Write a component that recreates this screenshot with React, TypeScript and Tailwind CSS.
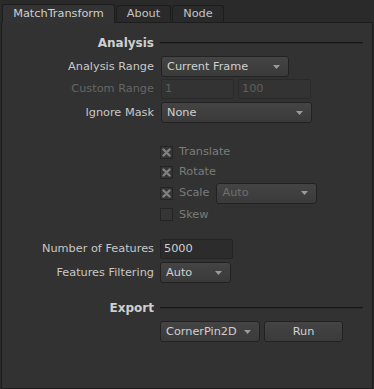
import type { FC, ReactNode } from "react";

// Nuke-style node properties panel

const Arrow: FC = () => (
  <svg width="7" height="4" viewBox="0 0 7 4" className="shrink-0">
    <path d="M0 0h7L3.5 4z" fill="#9a9a9a" />
  </svg>
);

const Dropdown: FC<{ value: string; w: string; disabled?: boolean }> = ({
  value,
  w,
  disabled,
}) => (
  <div
    className={`${w} h-full flex items-center justify-between pl-[5px] pr-[8px] rounded-[3px] border border-[#222] bg-gradient-to-b from-[#444] to-[#3a3a3a] ${
      disabled ? "text-[#6e6e6e]" : "text-[#d0d0d0]"
    }`}
  >
    <span>{value}</span>
    <Arrow />
  </div>
);

const Field: FC<{ value: string; w: string; disabled?: boolean }> = ({
  value,
  w,
  disabled,
}) => (
  <div
    className={`${w} h-full flex items-center pl-[3px] rounded-[2px] border ${
      disabled
        ? "border-[#2a2a2a] bg-[#333] text-[#5e5e5e]"
        : "border-[#242424] bg-[#2c2c2c] text-[#d0d0d0]"
    }`}
  >
    {value}
  </div>
);

const Row: FC<{ label?: string; dim?: boolean; h: string; mt: string; children: ReactNode }> = ({
  label,
  dim,
  h,
  mt,
  children,
}) => (
  <div className={`flex items-center gap-[6px] ${h} ${mt}`}>
    <div className={`w-[152px] text-right ${dim ? "text-[#666]" : "text-[#c8c8c8]"}`}>
      {label}
    </div>
    <div className="flex h-full items-center gap-[4px]">{children}</div>
  </div>
);

const Header: FC<{ title: string; mt: string }> = ({ title, mt }) => (
  <div className={`flex items-center gap-[6px] h-[18px] ${mt}`}>
    <div className="w-[152px] text-right font-bold text-[#cfcfcf] text-[12px]">{title}</div>
    <div className="w-[203px] h-[2px] border-t border-[#161616] bg-[#2b2b2b]" />
  </div>
);

const Check: FC<{ label: string; checked?: boolean; h: string; children?: ReactNode }> = ({
  label,
  checked,
  h,
  children,
}) => (
  <div className={`flex items-center ${h} pl-[158px] text-[#7c7c7c]`}>
    <div className="w-[13px] h-[13px] border border-[#242424] bg-[#353535] flex items-center justify-center">
      {checked && (
        <svg width="9" height="9" viewBox="0 0 9 9">
          <path d="M1.5 1.5l6 6M7.5 1.5l-6 6" stroke="#808080" strokeWidth="2.4" strokeLinecap="round" />
        </svg>
      )}
    </div>
    <span className="ml-[6px]">{label}</span>
    {children}
  </div>
);

export default function App() {
  return (
    <div
      className="w-[374px] h-[389px] bg-[#2a2a2a] text-[11.3px] leading-none overflow-hidden"
      style={{ fontFamily: '"DejaVu Sans", Verdana, sans-serif' }}
    >
      <div className="flex items-end h-[22px] pl-[2px] gap-[1px]">
        <div className="w-[113px] h-[19px] flex items-center justify-center bg-[#333] border border-b-0 border-[#1d1d1d] rounded-t-[3px] text-[#cfcfcf] relative top-[1px]">
          MatchTransform
        </div>
        <div className="w-[55px] h-[17px] flex items-center justify-center bg-[#2a2a2a] border border-b-0 border-[#1d1d1d] rounded-t-[3px] text-[#c4c4c4]">
          About
        </div>
        <div className="w-[52px] h-[17px] flex items-center justify-center bg-[#2a2a2a] border border-b-0 border-[#1d1d1d] rounded-t-[3px] text-[#c4c4c4]">
          Node
        </div>
      </div>
      <div className="ml-[1px] w-[372px] h-[367px] border border-[#1d1d1d] bg-[#323232] pt-[11px]">
        <Header title="Analysis" mt="mt-0" />
        <Row label="Analysis Range" h="h-[21px]" mt="mt-[4px]">
          <Dropdown value="Current Frame" w="w-[128px] ml-[1px]" />
        </Row>
        <Row label="Custom Range" dim h="h-[20px]" mt="mt-[2px]">
          <Field value="1" w="w-[73px] ml-[1px]" disabled />
          <Field value="100" w="w-[73px]" disabled />
        </Row>
        <Row label="Ignore Mask" h="h-[21px]" mt="mt-[3px]">
          <Dropdown value="None" w="w-[151px] ml-[1px]" />
        </Row>
        <div className="mt-[19px]">
          <Check label="Translate" checked h="h-[20px]" />
          <Check label="Rotate" checked h="h-[20px]" />
          <Check label="Scale" checked h="h-[22px]">
            <div className="h-[21px] ml-[7px]">
              <Dropdown value="Auto" w="w-[101px]" disabled />
            </div>
          </Check>
          <Check label="Skew" h="h-[21px]" />
        </div>
        <Row label="Number of Features" h="h-[20px]" mt="mt-[14px]">
          <Field value="5000" w="w-[73px]" />
        </Row>
        <Row label="Features Filtering" h="h-[21px]" mt="mt-[3px]">
          <Dropdown value="Auto" w="w-[71px]" />
        </Row>
        <Header title="Export" mt="mt-[16px]" />
        <Row h="h-[21px]" mt="mt-[4px]">
          <Dropdown value="CornerPin2D" w="w-[100px]" />
          <div className="w-[79px] h-full flex items-center justify-center rounded-[3px] border border-[#222] bg-gradient-to-b from-[#444] to-[#3a3a3a] text-[#d0d0d0]">
            Run
          </div>
        </Row>
      </div>
    </div>
  );
}
